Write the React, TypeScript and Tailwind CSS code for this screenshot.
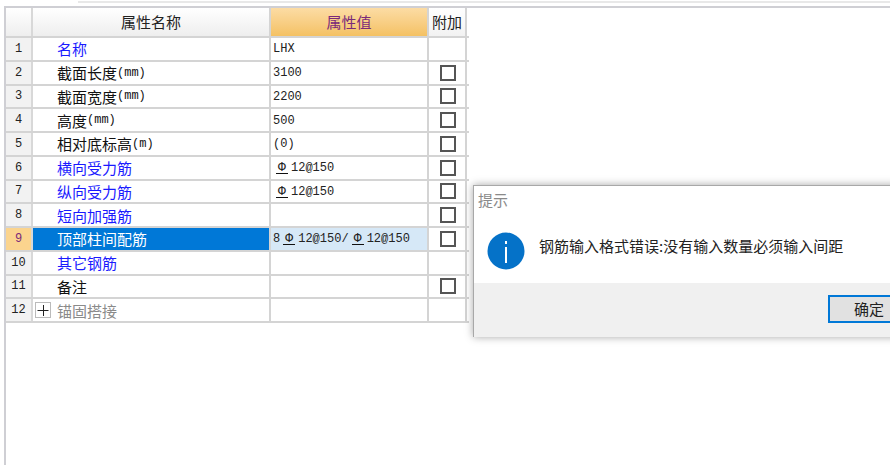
const CJK = "font-['Noto_Sans_CJK_SC','Liberation_Sans',sans-serif]";
const MONO = "font-['Liberation_Mono','Noto_Sans_CJK_SC',monospace]";

interface Row {
  no: number;
  name: string;
  unit?: string;
  value?: React.ReactNode;
  blue?: boolean;
  check?: boolean;
  grey?: boolean;
}

function Bar() {
  return <span className="mx-[3px] inline-block h-[12px] w-[12px] border-b border-[#111] text-center text-[13px] leading-[11px]">Φ</span>;
}

const rows: Row[] = [
  { no: 1, name: "名称", value: "LHX", blue: true },
  { no: 2, name: "截面长度", unit: "(mm)", value: "3100", check: true },
  { no: 3, name: "截面宽度", unit: "(mm)", value: "2200", check: true },
  { no: 4, name: "高度", unit: "(mm)", value: "500", check: true },
  { no: 5, name: "相对底标高", unit: "(m)", value: "(0)", check: true },
  { no: 6, name: "横向受力筋", value: <span><Bar />12@150</span>, blue: true, check: true },
  { no: 7, name: "纵向受力筋", value: <span><Bar />12@150</span>, blue: true, check: true },
  { no: 8, name: "短向加强筋", blue: true, check: true },
  { no: 9, name: "顶部柱间配筋", value: <span>8<Bar />12@150/<Bar />12@150</span>, blue: true, check: true },
  { no: 10, name: "其它钢筋", blue: true },
  { no: 11, name: "备注", check: true },
  { no: 12, name: "锚固搭接", grey: true },
];

function PropertyRow({ row }: { row: Row }) {
  const selected = row.no === 9;
  const nameColor = selected ? "bg-[#0078d7] text-white" : row.grey ? "text-[#8a8a8a]" : row.blue ? "text-[#1a1aff]" : "text-[#111]";
  return (
    <div className="flex h-[23.75px] border-b-2 border-[#d4d4d4]">
      <div className={`flex w-[27px] shrink-0 items-center justify-center border-r-2 border-[#d8d8d8] text-[12px] ${MONO} ${selected ? "bg-[#fbd48e] text-[#7a2a7a]" : "bg-[#f2f2f2] text-[#222]"}`}>
        {row.no}
      </div>
      <div className={`flex w-[238px] shrink-0 items-center border-r-2 border-[#d4d4d4] text-[15px] leading-none ${CJK} ${nameColor} ${row.grey ? "pl-[2px]" : "pl-[24px]"}`}>
        {row.grey && (
          <span className="mr-[6px] flex h-[16px] w-[16px] items-center justify-center border border-[#bbb]">
            <svg width="14" height="14" viewBox="0 0 14 14">
              <path d="M1.5 7.5h11M7.5 2v11" stroke="#222" strokeWidth="1" fill="none" />
            </svg>
          </span>
        )}
        {row.name}
        {row.unit && <span className={`${MONO} text-[12px]`}>{row.unit}</span>}
      </div>
      <div className={`flex w-[158px] shrink-0 items-center border-r-2 border-[#d4d4d4] pl-[2px] pt-[1px] text-[12px] text-[#222] ${MONO} ${selected ? "bg-[#d6e8f7]" : ""}`}>
        {row.value}
      </div>
      <div className="flex w-[38px] shrink-0 items-center border-r-2 border-[#d4d4d4] pl-[11px]">
        {row.check && <span className="h-[16px] w-[16px] border-2 border-[#555]" />}
      </div>
    </div>
  );
}

export default function App() {
  return (
    <div className="relative h-[465px] w-[890px] overflow-hidden bg-white">
      <div className="ml-[78px] h-[3px] border-b-2 border-[#e8e8e8]" />
      <div className="ml-[4px] mt-[3px] h-[459px] border-l-2 border-t-2 border-[#cfcfd4]">
        <div className="w-[463px]">
          <div className={`flex h-[30px] border-b-2 border-[#d4d4d4] text-[15px] ${CJK}`}>
            <div className="w-[27px] shrink-0 border-r-2 border-[#d8d8d8] bg-gradient-to-b from-white to-[#eeeeee]" />
            <div className="flex w-[238px] shrink-0 items-center justify-center border-r-2 border-[#d4d4d4] bg-gradient-to-b from-white to-[#eeeeee] text-[#222]">
              属性名称
            </div>
            <div className="flex w-[158px] shrink-0 items-center justify-center border-r-2 border-[#d4d4d4] bg-gradient-to-b from-[#fcdca4] to-[#f4c163] text-[#7a2a7a]">
              属性值
            </div>
            <div className="flex w-[38px] shrink-0 items-center justify-center border-r-2 border-[#d4d4d4] bg-gradient-to-b from-white to-[#f2f2f2] text-[#222]">
              附加
            </div>
          </div>
          {rows.map((row) => (
            <PropertyRow key={row.no} row={row} />
          ))}
        </div>
      </div>

      <div className={`absolute left-[473px] top-[185px] flex h-[152px] w-[440px] flex-col border-t border-l border-[#a8a8a8] bg-white shadow-[0_0_8px_rgba(0,0,0,0.35)] ${CJK}`}>
        <div className="h-[32px] pl-[4px] pt-[4px] text-[15px] leading-[20px] text-[#8a8a8a]">提示</div>
        <div className="flex h-[65px] items-start pl-[13px] pt-[14px]">
          <svg width="38" height="38" viewBox="0 0 38 38" className="shrink-0">
            <circle cx="19" cy="19" r="18.5" fill="#0572c8" />
            <rect x="18" y="15" width="2" height="16" fill="#fff" />
            <rect x="18" y="9" width="2" height="3" fill="#fff" />
          </svg>
          <span className="ml-[14px] pt-[4px] text-[15px] leading-[20px] text-[#222]">钢筋输入格式错误:没有输入数量必须输入间距</span>
        </div>
        <div className="flex-1 bg-[#f0f0f0] pl-[354px] pt-[12px]">
          <div className="flex h-[28px] w-[75px] items-center border-2 border-[#0078d7] bg-[#e1e1e1] pl-[24px] text-[15px] text-[#222]">确定</div>
        </div>
      </div>
    </div>
  );
}
